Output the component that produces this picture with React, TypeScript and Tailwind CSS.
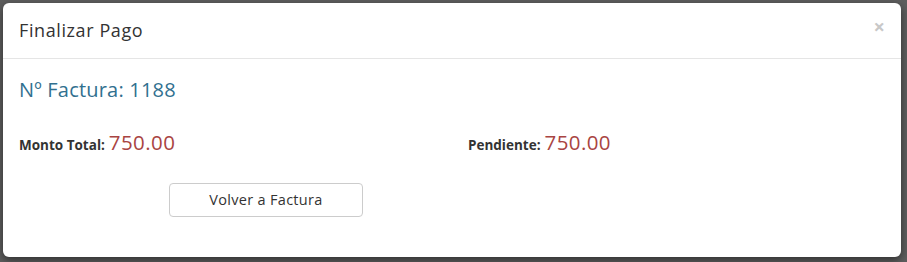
import React from 'react';

const App: React.FC = () => {
  return (
    <div className="w-[907px] h-[262px] bg-[#5e5e5e] p-[3px] pr-[6px] pb-[5px] overflow-hidden" style={{ fontFamily: '"Open Sans", "Noto Sans", sans-serif' }}>
      <div className="w-[898px] h-[254px] bg-white rounded-md shadow-[0_3px_9px_rgba(0,0,0,0.5)] flex flex-col">
        {/* Header */}
        <div className="h-[56px] border-b border-[#e5e5e5] flex items-center justify-between pl-4 pr-4 shrink-0">
          <h4 className="text-[18px] text-[#333] tracking-[0.6px]">Finalizar Pago</h4>
          <button className="text-[#c8c8c8] text-[20px] font-bold leading-none -mt-[7px]">×</button>
        </div>

        {/* Body */}
        <div className="flex flex-col pl-4 pr-4 pt-[19px]">
          <h3 className="text-[20px] text-[#31708f] leading-[24px] tracking-[0.2px]">Nº Factura: 1188</h3>

          <div className="grid grid-cols-[449px_1fr] mt-[25px]">
            <div className="flex items-baseline">
              <span className="text-[13.5px] font-bold text-[#333]">Monto Total:</span>
              <span className="text-[20.5px] text-[#a94442] ml-1 tracking-[0.4px]">750.00</span>
            </div>
            <div className="flex items-baseline">
              <span className="text-[13.5px] font-bold text-[#333]">Pendiente:</span>
              <span className="text-[20.5px] text-[#a94442] ml-1 tracking-[0.4px]">750.00</span>
            </div>
          </div>

          <div className="mt-[25px] pl-[150px]">
            <button className="w-[194px] h-[34px] border border-[#ccc] rounded text-[14.5px] text-[#333] bg-white tracking-[0.3px]">
              Volver a Factura
            </button>
          </div>
        </div>
      </div>
    </div>
  );
};

export default App;
